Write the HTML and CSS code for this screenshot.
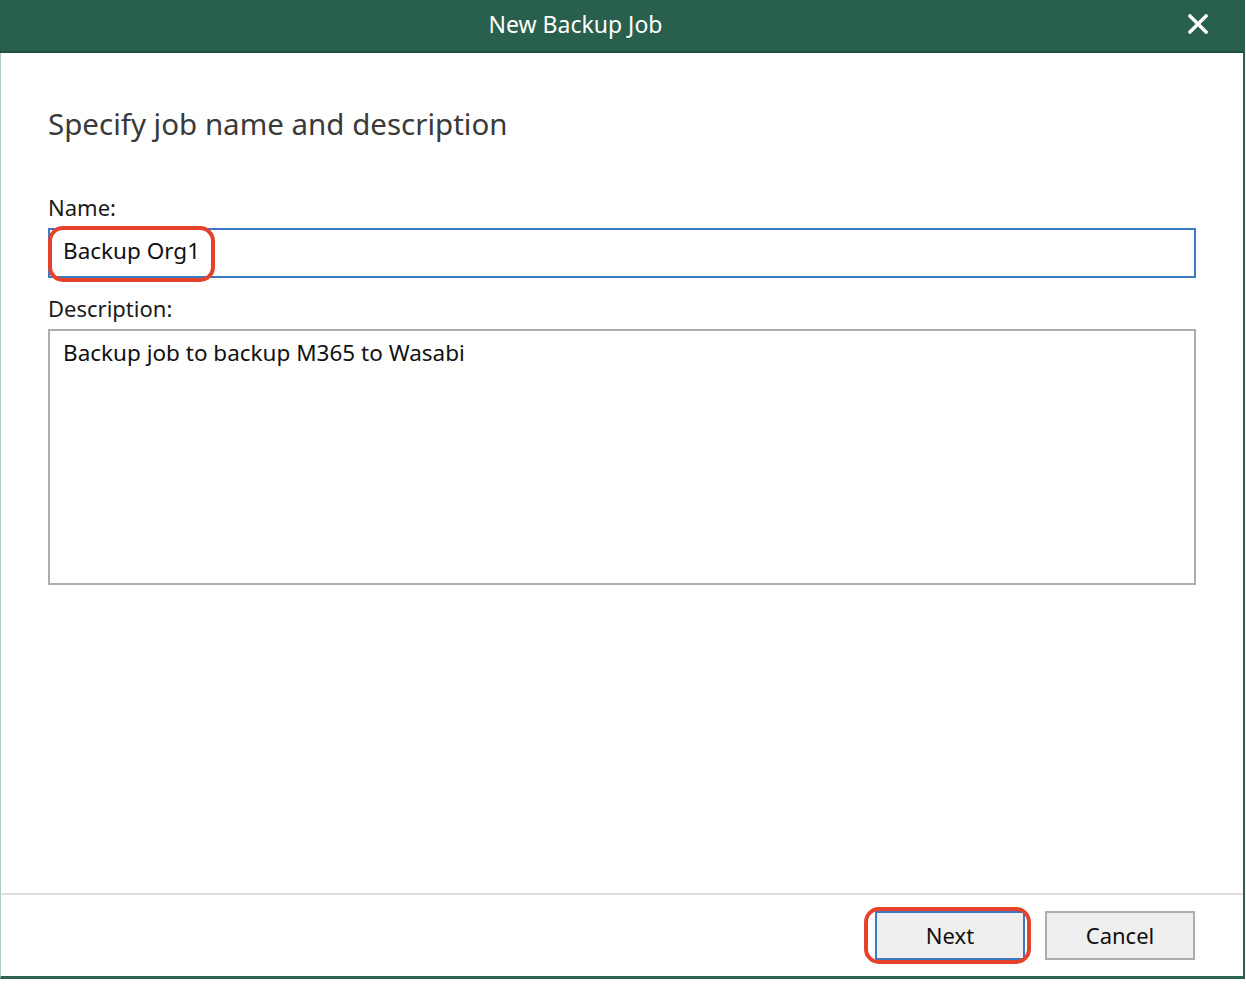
FILE: index.html
```html
<!DOCTYPE html>
<html lang="en">
<head>
<meta charset="utf-8">
<title>New Backup Job</title>
<link rel="stylesheet" href="styles.css">
</head>
<body>
<div class="window">
  <header class="titlebar">
    <div class="title">New Backup Job</div>
    <button class="close" aria-label="Close">
      <svg width="20" height="20" viewBox="0 0 20 20"><path d="M2 2 L18 18 M18 2 L2 18" stroke="#ffffff" stroke-width="3.4" stroke-linecap="square" fill="none"/></svg>
    </button>
  </header>
  <main class="content">
    <h1 class="heading">Specify job name and description</h1>
    <div class="label label-name">Name:</div>
    <div class="field field-name">
      <span class="value">Backup Org1</span>
      <span class="annot annot-name"></span>
    </div>
    <div class="label label-desc">Description:</div>
    <div class="field field-desc">Backup job to backup M365 to Wasabi</div>
  </main>
  <footer class="footer">
    <button class="btn btn-next">Next<span class="annot annot-next"></span></button>
    <button class="btn btn-cancel">Cancel</button>
  </footer>
</div>
</body>
</html>
```

FILE: styles.css
```css
html, body {
  margin: 0;
  padding: 0;
  background: #ffffff;
}

body {
  font-family: "Noto Sans", "Liberation Sans", sans-serif;
  color: #1a1a1a;
}

.window {
  box-sizing: border-box;
  width: 1245px;
  height: 979px;
  display: flex;
  flex-direction: column;
  border-left: 1px solid #a9cfc3;
  border-right: 2px solid #2b6150;
  border-bottom: 3px solid #2b6150;
  background: #ffffff;
}

.titlebar {
  height: 53px;
  flex: none;
  display: flex;
  align-items: stretch;
  background: #295f4d;
  box-sizing: border-box;
  border-bottom: 2px solid #1f4f3e;
  margin-left: -1px;
  margin-right: -2px;
}

.title {
  flex: 1;
  display: flex;
  align-items: center;
  justify-content: center;
  color: #ffffff;
  font-size: 23px;
  padding-left: 1px;
  padding-bottom: 3px;
}

.close {
  width: 95px;
  flex: none;
  background: none;
  border: none;
  padding: 0 0 4px 0;
  display: flex;
  align-items: center;
  justify-content: center;
}

.content {
  flex: 1;
  padding: 0 47px 0 47px;
  display: flex;
  flex-direction: column;
}

.heading {
  margin: 51px 0 0 0;
  font-size: 29.5px;
  font-weight: 400;
  line-height: 40px;
  color: #3a3a3a;
}

.label {
  font-size: 22px;
  line-height: 28px;
  color: #1a1a1a;
}

.label-name {
  margin-top: 49px;
}

.label-desc {
  margin-top: 16px;
}

.field {
  position: relative;
  box-sizing: border-box;
  font-size: 22.5px;
  color: #111111;
  padding-left: 13px;
}

.field-name {
  height: 50px;
  margin-top: 7px;
  border: 2px solid #3c78c4;
  display: flex;
  align-items: center;
  padding-bottom: 5px;
}

.field-desc {
  height: 256px;
  margin-top: 7px;
  border: 2px solid #adadad;
  padding-top: 7px;
  line-height: 30px;
}

.annot {
  position: absolute;
  box-sizing: border-box;
  border: 4px solid #e6412b;
  border-radius: 15px;
  pointer-events: none;
}

.annot-name {
  left: -2px;
  top: -4px;
  width: 167px;
  height: 56px;
}

.footer {
  flex: none;
  height: 83px;
  box-sizing: border-box;
  border-top: 2px solid #dddddd;
  padding: 16px 48px 16px 0;
  display: flex;
  justify-content: flex-end;
  gap: 20px;
}

.btn {
  position: relative;
  width: 150px;
  height: 49px;
  box-sizing: border-box;
  background: #efefef;
  border: 2px solid #adadad;
  font-family: "Noto Sans", "Liberation Sans", sans-serif;
  font-size: 22px;
  color: #111111;
  padding: 0 0 2px 0;
}

.btn-next {
  border-color: #3c78c4;
}

.annot-next {
  left: -13px;
  top: -6px;
  width: 167px;
  height: 57px;
}
```
